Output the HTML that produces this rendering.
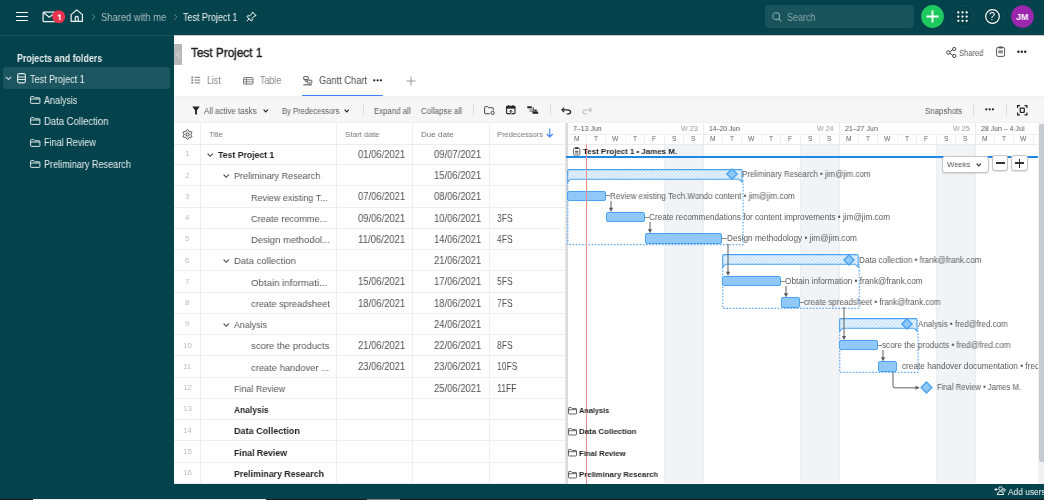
<!DOCTYPE html>
<html><head><meta charset="utf-8"><style>
html,body{margin:0;padding:0;}
body{width:1044px;height:500px;overflow:hidden;position:relative;background:#05434c;font-family:'Liberation Sans', sans-serif;}
.t{position:absolute;line-height:1;white-space:pre;transform-origin:0 0;will-change:transform;}
svg{overflow:visible}
</style></head><body>
<div style="position:absolute;left:0px;top:35px;width:174px;height:1px;background:#13525b"></div>
<div style="position:absolute;left:16px;top:11.55px;width:12px;height:1.9px;background:#fff;border-radius:1px"></div>
<div style="position:absolute;left:16px;top:15.55px;width:12px;height:1.9px;background:#fff;border-radius:1px"></div>
<div style="position:absolute;left:16px;top:19.55px;width:12px;height:1.9px;background:#fff;border-radius:1px"></div>
<svg style="position:absolute;left:41.5px;top:10.5px;" width="15" height="12" viewBox="0 0 15 12"><rect x="1.1" y="1.1" width="12.4" height="9.6" rx="0.9" fill="none" stroke="#f2f5f5" stroke-width="1.2"/><path d="M1.6 1.8 L7.3 6.3 L13 1.8" fill="none" stroke="#f2f5f5" stroke-width="1.2"/></svg>
<svg style="position:absolute;left:52px;top:10.1px;" width="13.4" height="13.4" viewBox="0 0 13.4 13.4"><circle cx="6.7" cy="6.7" r="6.5" fill="#e8344e"/></svg>
<svg style="position:absolute;left:56.5px;top:13.8px;" width="5" height="7" viewBox="0 0 5 7"><path d="M2.9 0.5 V6.2 M2.9 0.7 L0.8 2.2" fill="none" stroke="#fff" stroke-width="1.25" stroke-linejoin="round"/></svg>
<svg style="position:absolute;left:69.5px;top:9.3px;" width="13.5" height="13.5" viewBox="0 0 13.5 13.5"><path d="M6.75 0.9 L12.4 5.6 V12.3 H1.1 V5.6 Z" fill="none" stroke="#f2f5f5" stroke-width="1.2" stroke-linejoin="round"/><path d="M5.3 12.3 V8.9 Q5.3 7.3 6.75 7.3 Q8.2 7.3 8.2 8.9 V12.3" fill="none" stroke="#f2f5f5" stroke-width="1.2"/></svg>
<svg style="position:absolute;left:91px;top:13px;" width="5" height="8" viewBox="0 0 5 8"><path d="M1 1 L4 4 L1 7" fill="none" stroke="#55808a" stroke-width="1"/></svg>
<div class="t" style="left:100.70px;top:11.73px;font-size:10.6px;color:#a9bec1;transform:scaleX(0.8858);">Shared with me</div>
<svg style="position:absolute;left:173px;top:13px;" width="5" height="8" viewBox="0 0 5 8"><path d="M1 1 L4 4 L1 7" fill="none" stroke="#55808a" stroke-width="1"/></svg>
<div class="t" style="left:183.00px;top:11.73px;font-size:10.6px;color:#f2f5f5;transform:scaleX(0.8475);">Test Project 1</div>
<svg style="position:absolute;left:246px;top:11px;" width="11" height="11" viewBox="0 0 11 11"><path d="M6.5 1 L10 4.5 L8.2 5.2 L6 7.4 L6.3 9.3 L5.3 10 L1 5.7 L1.7 4.7 L3.6 5 L5.8 2.8 Z M3.3 7.7 L0.8 10.2" fill="none" stroke="#fff" stroke-width="1" stroke-linejoin="round"/></svg>
<div style="position:absolute;left:765px;top:5px;width:149.2px;height:22.8px;background:#19545c;border-radius:4px"></div>
<svg style="position:absolute;left:771.5px;top:11.5px;" width="10" height="10" viewBox="0 0 10 10"><circle cx="4.2" cy="4.2" r="3.4" fill="none" stroke="#8aa8ac" stroke-width="1.1"/><path d="M6.7 6.7 L9.3 9.3" stroke="#8aa8ac" stroke-width="1.1"/></svg>
<div class="t" style="left:787.20px;top:12.93px;font-size:10px;color:#86a4a8;transform:scaleX(0.9026);">Search</div>
<svg style="position:absolute;left:921px;top:5px;" width="23" height="23" viewBox="0 0 23 23"><circle cx="11.5" cy="11.5" r="11.4" fill="#1ec95f"/><path d="M11.5 5.5 V17.5 M5.5 11.5 H17.5" stroke="#fff" stroke-width="1.8"/></svg>
<svg style="position:absolute;left:951px;top:4.7px;" width="23" height="23" viewBox="0 0 23 23"><circle cx="11.5" cy="11.5" r="11" fill="#053f48" stroke="#11505a" stroke-width="0.8"/><circle cx="7.30" cy="7.40" r="1.15" fill="#fff"/><circle cx="7.30" cy="11.60" r="1.15" fill="#fff"/><circle cx="7.30" cy="15.80" r="1.15" fill="#fff"/><circle cx="11.50" cy="7.40" r="1.15" fill="#fff"/><circle cx="11.50" cy="11.60" r="1.15" fill="#fff"/><circle cx="11.50" cy="15.80" r="1.15" fill="#fff"/><circle cx="15.70" cy="7.40" r="1.15" fill="#fff"/><circle cx="15.70" cy="11.60" r="1.15" fill="#fff"/><circle cx="15.70" cy="15.80" r="1.15" fill="#fff"/></svg>
<svg style="position:absolute;left:980.8px;top:4.9px;" width="23" height="23" viewBox="0 0 23 23"><circle cx="11.5" cy="11.5" r="11" fill="#053f48" stroke="#11505a" stroke-width="0.8"/><circle cx="11.5" cy="11.5" r="6.8" fill="none" stroke="#fff" stroke-width="1.2"/></svg>
<div class="t" style="left:989.24px;top:11.24px;font-size:11px;color:#fff;">?</div>
<svg style="position:absolute;left:1010.5px;top:5px;" width="23" height="23" viewBox="0 0 23 23"><circle cx="11.5" cy="11.5" r="11.3" fill="#9a27ae"/></svg>
<div class="t" style="left:1015.75px;top:12.28px;font-size:9.5px;color:#fff;font-weight:bold;transform:scaleX(0.9467);">JM</div>
<div class="t" style="left:16.90px;top:53.53px;font-size:10.2px;color:#e9eff0;font-weight:bold;transform:scaleX(0.8698);">Projects and folders</div>
<div style="position:absolute;left:2.6px;top:67.4px;width:167.4px;height:21.2px;background:#1b5660;border-radius:3px"></div>
<svg style="position:absolute;left:5px;top:76px;" width="7" height="5" viewBox="0 0 7 5"><path d="M0.8 0.8 L3.5 3.5 L6.2 0.8" fill="none" stroke="#c5d5d8" stroke-width="1.2"/></svg>
<svg style="position:absolute;left:16.8px;top:72.8px;" width="9" height="10.5" viewBox="0 0 9 10.5"><rect x="0.6" y="0.6" width="7.8" height="9.3" rx="1.8" fill="none" stroke="#dce6e7" stroke-width="1.1"/><path d="M0.8 4 H8.2 M0.8 6.5 H8.2" stroke="#dce6e7" stroke-width="1"/></svg>
<div class="t" style="left:30.20px;top:74.83px;font-size:10.4px;color:#e9eff0;transform:scaleX(0.8673);">Test Project 1</div>
<svg style="position:absolute;left:30px;top:96px;" width="10.5" height="8" viewBox="0 0 10.5 8"><path d="M0.6 1.2 Q0.6 0.6 1.2 0.6 H3.8 L5 1.8 H9.3 Q9.9 1.8 9.9 2.4 V6.8 Q9.9 7.4 9.3 7.4 H1.2 Q0.6 7.4 0.6 6.8 Z M0.6 3 H9.9" fill="none" stroke="#dce6e7" stroke-width="1"/></svg>
<div class="t" style="left:43.60px;top:95.73px;font-size:10.2px;color:#e9eff0;transform:scaleX(0.8804);">Analysis</div>
<svg style="position:absolute;left:30px;top:117.3px;" width="10.5" height="8" viewBox="0 0 10.5 8"><path d="M0.6 1.2 Q0.6 0.6 1.2 0.6 H3.8 L5 1.8 H9.3 Q9.9 1.8 9.9 2.4 V6.8 Q9.9 7.4 9.3 7.4 H1.2 Q0.6 7.4 0.6 6.8 Z M0.6 3 H9.9" fill="none" stroke="#dce6e7" stroke-width="1"/></svg>
<div class="t" style="left:43.60px;top:117.03px;font-size:10.2px;color:#e9eff0;transform:scaleX(0.9321);">Data Collection</div>
<svg style="position:absolute;left:30px;top:138.7px;" width="10.5" height="8" viewBox="0 0 10.5 8"><path d="M0.6 1.2 Q0.6 0.6 1.2 0.6 H3.8 L5 1.8 H9.3 Q9.9 1.8 9.9 2.4 V6.8 Q9.9 7.4 9.3 7.4 H1.2 Q0.6 7.4 0.6 6.8 Z M0.6 3 H9.9" fill="none" stroke="#dce6e7" stroke-width="1"/></svg>
<div class="t" style="left:43.60px;top:138.43px;font-size:10.2px;color:#e9eff0;transform:scaleX(0.8881);">Final Review</div>
<svg style="position:absolute;left:30px;top:160px;" width="10.5" height="8" viewBox="0 0 10.5 8"><path d="M0.6 1.2 Q0.6 0.6 1.2 0.6 H3.8 L5 1.8 H9.3 Q9.9 1.8 9.9 2.4 V6.8 Q9.9 7.4 9.3 7.4 H1.2 Q0.6 7.4 0.6 6.8 Z M0.6 3 H9.9" fill="none" stroke="#dce6e7" stroke-width="1"/></svg>
<div class="t" style="left:43.60px;top:159.73px;font-size:10.2px;color:#e9eff0;transform:scaleX(0.8913);">Preliminary Research</div>
<div style="position:absolute;left:174px;top:35px;width:870px;height:448.5px;background:#fff"></div>
<div style="position:absolute;left:174px;top:35px;width:870px;height:1px;background:#c3cbcc"></div>
<div style="position:absolute;left:174px;top:44px;width:8px;height:20.5px;background:#b9b9b9"></div>
<svg style="position:absolute;left:175.5px;top:50.5px;" width="5" height="7" viewBox="0 0 5 7"><path d="M3.5 0.8 L1 3.5 L3.5 6.2" fill="none" stroke="#e6e6e6" stroke-width="1"/></svg>
<div class="t" style="left:191.00px;top:46.01px;font-size:13.3px;color:#1f1f1f;transform:scaleX(0.8863);-webkit-text-stroke:0.45px #1f1f1f;">Test Project 1</div>
<svg style="position:absolute;left:945.5px;top:47px;" width="10.5" height="11" viewBox="0 0 10.5 11"><circle cx="2.3" cy="5.5" r="1.7" fill="none" stroke="#444" stroke-width="1"/><circle cx="8.2" cy="2" r="1.6" fill="none" stroke="#444" stroke-width="1"/><circle cx="8.2" cy="9" r="1.6" fill="none" stroke="#444" stroke-width="1"/><path d="M3.8 4.6 L6.8 2.8 M3.8 6.4 L6.8 8.2" stroke="#444" stroke-width="1"/></svg>
<div class="t" style="left:959.30px;top:48.82px;font-size:8.4px;color:#555;transform:scaleX(0.9032);">Shared</div>
<svg style="position:absolute;left:995.5px;top:46px;" width="9.5" height="11" viewBox="0 0 9.5 11"><rect x="0.6" y="1.4" width="8" height="9" rx="1.5" fill="none" stroke="#555" stroke-width="1"/><rect x="2.6" y="0.5" width="4" height="2" rx="0.5" fill="#555"/><rect x="2.3" y="4.3" width="4.6" height="3" fill="#888"/></svg>
<svg style="position:absolute;left:1017px;top:50px;" width="10" height="3.5" viewBox="0 0 10 3.5"><circle cx="1.4" cy="1.7" r="1.2" fill="#222"/><circle cx="4.8" cy="1.7" r="1.2" fill="#222"/><circle cx="8.2" cy="1.7" r="1.2" fill="#222"/></svg>
<svg style="position:absolute;left:191.2px;top:75.6px;" width="9.5" height="8.5" viewBox="0 0 9.5 8.5"><rect x="0.4" y="0.5" width="1.7" height="1.7" fill="#7a7a7a"/><path d="M3.6 1.35 H9.2" stroke="#7a7a7a" stroke-width="1"/><rect x="0.4" y="3.25" width="1.7" height="1.7" fill="#7a7a7a"/><path d="M3.6 4.1 H9.2" stroke="#7a7a7a" stroke-width="1"/><rect x="0.4" y="6.0" width="1.7" height="1.7" fill="#7a7a7a"/><path d="M3.6 6.85 H9.2" stroke="#7a7a7a" stroke-width="1"/></svg>
<div class="t" style="left:207.00px;top:75.58px;font-size:10.3px;color:#858585;transform:scaleX(0.8546);">List</div>
<svg style="position:absolute;left:242.8px;top:76.6px;" width="10.5" height="7.5" viewBox="0 0 10.5 7.5"><rect x="0.5" y="0.5" width="9.5" height="6.6" rx="0.8" fill="none" stroke="#7a7a7a" stroke-width="1"/><path d="M0.5 2.7 H10 M0.5 4.9 H10 M3.5 0.5 V7.1" stroke="#7a7a7a" stroke-width="0.9"/></svg>
<div class="t" style="left:259.50px;top:75.58px;font-size:10.3px;color:#858585;transform:scaleX(0.8609);">Table</div>
<svg style="position:absolute;left:303.2px;top:75.6px;" width="9.5" height="9.5" viewBox="0 0 9.5 9.5"><rect x="0.7" y="0.7" width="4.6" height="2.8" rx="0.5" fill="none" stroke="#555" stroke-width="1"/><path d="M2.3 3.5 V5.3 H4.2" stroke="#555" stroke-width="1" fill="none"/><rect x="4.2" y="4.2" width="4.6" height="2.8" rx="0.5" fill="none" stroke="#555" stroke-width="1"/><path d="M0.4 8.8 H9" stroke="#555" stroke-width="1.1"/></svg>
<div class="t" style="left:318.60px;top:75.58px;font-size:10.3px;color:#505050;transform:scaleX(0.9036);">Gantt Chart</div>
<svg style="position:absolute;left:373px;top:78.8px;" width="10" height="3" viewBox="0 0 10 3"><circle cx="1.3" cy="1.3" r="1.15" fill="#222"/><circle cx="4.6" cy="1.3" r="1.15" fill="#222"/><circle cx="7.8999999999999995" cy="1.3" r="1.15" fill="#222"/></svg>
<svg style="position:absolute;left:405.5px;top:76px;" width="10" height="10" viewBox="0 0 10 10"><path d="M5 0.5 V9.5 M0.5 5 H9.5" stroke="#9a9a9a" stroke-width="1"/></svg>
<div style="position:absolute;left:302.3px;top:94.5px;width:81px;height:1.8px;background:#3b82f6;border-radius:1px"></div>
<div style="position:absolute;left:174px;top:96px;width:870px;height:26.5px;background:#f6f6f6"></div>
<div style="position:absolute;left:174px;top:96px;width:870px;height:2px;background:#f2f2f2"></div>
<div style="position:absolute;left:174px;top:121.5px;width:870px;height:1px;background:#f1f1f1"></div>
<svg style="position:absolute;left:191.5px;top:105.5px;" width="8" height="9.5" viewBox="0 0 8 9.5"><path d="M0.3 0.5 H7.7 L4.9 4.4 V9 L3.1 8 V4.4 Z" fill="#222"/></svg>
<div class="t" style="left:204.00px;top:107.17px;font-size:8.3px;color:#5a5a5a;transform:scaleX(0.9567);">All active tasks</div>
<svg style="position:absolute;left:262.5px;top:108.8px;" width="5.5" height="4" viewBox="0 0 5.5 4"><path d="M0.6 0.7 L2.75 2.9 L4.9 0.7" fill="none" stroke="#222" stroke-width="1.1"/></svg>
<div class="t" style="left:281.50px;top:107.17px;font-size:8.3px;color:#5a5a5a;transform:scaleX(0.9168);">By Predecessors</div>
<svg style="position:absolute;left:344.2px;top:108.8px;" width="5.5" height="4" viewBox="0 0 5.5 4"><path d="M0.6 0.7 L2.75 2.9 L4.9 0.7" fill="none" stroke="#222" stroke-width="1.1"/></svg>
<div style="position:absolute;left:363.3px;top:105.2px;width:1px;height:9.5px;background:#dcdcdc"></div>
<div class="t" style="left:373.80px;top:107.17px;font-size:8.3px;color:#5a5a5a;transform:scaleX(0.9419);">Expand all</div>
<div class="t" style="left:421.00px;top:107.17px;font-size:8.3px;color:#5a5a5a;transform:scaleX(0.9559);">Collapse all</div>
<div style="position:absolute;left:473.4px;top:105.2px;width:1px;height:9.5px;background:#dcdcdc"></div>
<svg style="position:absolute;left:484px;top:105.8px;" width="11.5" height="9" viewBox="0 0 11.5 9"><path d="M5.6 7.7 H1.3 Q0.6 7.7 0.6 7 V1.3 Q0.6 0.6 1.3 0.6 H3.7 L4.8 1.7 H8.6 Q9.3 1.7 9.3 2.4 V4.3" fill="none" stroke="#444" stroke-width="1"/><circle cx="8.6" cy="6.9" r="1.6" fill="none" stroke="#444" stroke-width="1"/></svg>
<svg style="position:absolute;left:506.3px;top:105.4px;" width="9.8" height="9.5" viewBox="0 0 9.8 9.5"><path d="M4 8.6 H1.4 Q0.6 8.6 0.6 7.8 V2 Q0.6 1.2 1.4 1.2 H8.2 Q9 1.2 9 2 V7.8 Q9 8.6 8.2 8.6 H5.8" fill="none" stroke="#222" stroke-width="1.1"/><rect x="0.6" y="1.2" width="8.4" height="2.4" fill="#222"/><path d="M2.6 0 V1.5 M7 0 V1.5" stroke="#222" stroke-width="1"/><path d="M4.9 9.5 V5.3 M3.6 6.6 L4.9 5.2 L6.2 6.6" stroke="#222" stroke-width="1" fill="none"/></svg>
<svg style="position:absolute;left:527.2px;top:106px;" width="11.5" height="8" viewBox="0 0 11.5 8"><rect x="0.3" y="0.3" width="4.5" height="2" fill="#222"/><path d="M2.5 3.8 H5.5 M2.5 5.3 H5.5" stroke="#555" stroke-width="0.8"/><path d="M6.2 1.3 V7.2" stroke="#222" stroke-width="1"/><rect x="5.6" y="5.6" width="5.6" height="2.2" fill="#222"/><rect x="7.3" y="3.6" width="2.5" height="2" fill="#222"/></svg>
<div style="position:absolute;left:550px;top:105.2px;width:1px;height:9.5px;background:#dcdcdc"></div>
<svg style="position:absolute;left:560.8px;top:106.5px;" width="10.5" height="7.5" viewBox="0 0 10.5 7.5"><path d="M3.2 0.6 L0.9 2.9 L3.2 5.2" fill="none" stroke="#222" stroke-width="1.2"/><path d="M1.2 2.9 H6.3 Q9.6 2.9 9.6 5 Q9.6 7 6.3 7 H5.5" fill="none" stroke="#222" stroke-width="1.2"/></svg>
<svg style="position:absolute;left:581.6px;top:106.5px;" width="10.5" height="7.5" viewBox="0 0 10.5 7.5"><path d="M7.3 0.6 L9.6 2.9 L7.3 5.2" fill="none" stroke="#c6c6c6" stroke-width="1.2"/><path d="M9.3 2.9 H4.2 Q0.9 2.9 0.9 5 Q0.9 7 4.2 7 H5" fill="none" stroke="#c6c6c6" stroke-width="1.2"/></svg>
<div class="t" style="left:925.40px;top:107.17px;font-size:8.3px;color:#5a5a5a;transform:scaleX(0.9485);">Snapshots</div>
<div style="position:absolute;left:973.3px;top:104.6px;width:1px;height:11px;background:#dcdcdc"></div>
<svg style="position:absolute;left:984.8px;top:108.3px;" width="10" height="3" viewBox="0 0 10 3"><circle cx="1.3" cy="1.3" r="1.15" fill="#222"/><circle cx="4.6" cy="1.3" r="1.15" fill="#222"/><circle cx="7.8999999999999995" cy="1.3" r="1.15" fill="#222"/></svg>
<div style="position:absolute;left:1006.1px;top:104.6px;width:1px;height:11px;background:#dcdcdc"></div>
<svg style="position:absolute;left:1016.8px;top:104.6px;" width="10.5" height="10.5" viewBox="0 0 10.5 10.5"><path d="M0.6 3 V0.6 H3 M7.5 0.6 H9.9 V3 M9.9 7.5 V9.9 H7.5 M3 9.9 H0.6 V7.5" fill="none" stroke="#222" stroke-width="1.2"/><rect x="3.2" y="3.2" width="4.1" height="4.1" rx="0.6" fill="none" stroke="#222" stroke-width="1.2"/></svg>
<div style="position:absolute;left:174px;top:144px;width:391px;height:1px;background:#ededed"></div>
<div style="position:absolute;left:174px;top:164.0px;width:391px;height:1px;background:#efefef"></div>
<div style="position:absolute;left:174px;top:185.25px;width:391px;height:1px;background:#efefef"></div>
<div style="position:absolute;left:174px;top:206.5px;width:391px;height:1px;background:#efefef"></div>
<div style="position:absolute;left:174px;top:227.75px;width:391px;height:1px;background:#efefef"></div>
<div style="position:absolute;left:174px;top:249.0px;width:391px;height:1px;background:#efefef"></div>
<div style="position:absolute;left:174px;top:270.25px;width:391px;height:1px;background:#efefef"></div>
<div style="position:absolute;left:174px;top:291.5px;width:391px;height:1px;background:#efefef"></div>
<div style="position:absolute;left:174px;top:312.75px;width:391px;height:1px;background:#efefef"></div>
<div style="position:absolute;left:174px;top:334.0px;width:391px;height:1px;background:#efefef"></div>
<div style="position:absolute;left:174px;top:355.25px;width:391px;height:1px;background:#efefef"></div>
<div style="position:absolute;left:174px;top:376.5px;width:391px;height:1px;background:#efefef"></div>
<div style="position:absolute;left:174px;top:397.75px;width:391px;height:1px;background:#efefef"></div>
<div style="position:absolute;left:174px;top:419.0px;width:391px;height:1px;background:#efefef"></div>
<div style="position:absolute;left:174px;top:440.25px;width:391px;height:1px;background:#efefef"></div>
<div style="position:absolute;left:174px;top:461.5px;width:391px;height:1px;background:#efefef"></div>
<div style="position:absolute;left:174px;top:482.75px;width:391px;height:1px;background:#efefef"></div>
<div style="position:absolute;left:199.9px;top:122.5px;width:1px;height:361px;background:#efefef"></div>
<div style="position:absolute;left:336.3px;top:122.5px;width:1px;height:361px;background:#efefef"></div>
<div style="position:absolute;left:412.0px;top:122.5px;width:1px;height:361px;background:#efefef"></div>
<div style="position:absolute;left:488.5px;top:122.5px;width:1px;height:361px;background:#efefef"></div>
<svg style="position:absolute;left:182.2px;top:128.5px;" width="11" height="11" viewBox="0 0 11 11"><g fill="none" stroke="#333" stroke-width="1"><circle cx="5.5" cy="5.5" r="1.6"/><path d="M5.50 0.65 L5.91 0.77 L6.28 1.09 L6.56 1.54 L6.77 2.00 L6.96 2.37 L7.17 2.60 L7.48 2.67 L7.89 2.65 L8.40 2.60 L8.93 2.62 L9.39 2.78 L9.70 3.07 L9.80 3.49 L9.71 3.97 L9.46 4.44 L9.17 4.85 L8.94 5.20 L8.85 5.50 L8.94 5.80 L9.17 6.15 L9.46 6.56 L9.71 7.03 L9.80 7.51 L9.70 7.92 L9.39 8.22 L8.93 8.38 L8.40 8.40 L7.89 8.35 L7.48 8.33 L7.18 8.40 L6.96 8.63 L6.77 9.00 L6.56 9.46 L6.28 9.91 L5.91 10.23 L5.50 10.35 L5.09 10.23 L4.72 9.91 L4.44 9.46 L4.23 9.00 L4.04 8.63 L3.82 8.40 L3.52 8.33 L3.11 8.35 L2.60 8.40 L2.07 8.38 L1.61 8.22 L1.30 7.93 L1.20 7.51 L1.29 7.03 L1.54 6.56 L1.83 6.15 L2.06 5.80 L2.15 5.50 L2.06 5.20 L1.83 4.85 L1.54 4.44 L1.29 3.97 L1.20 3.49 L1.30 3.08 L1.61 2.78 L2.07 2.62 L2.60 2.60 L3.11 2.65 L3.52 2.67 L3.83 2.60 L4.04 2.37 L4.23 2.00 L4.44 1.54 L4.72 1.09 L5.09 0.77 L5.50 0.65 Z"/></g></svg>
<div class="t" style="left:209.00px;top:130.96px;font-size:8.1px;color:#777;transform:scaleX(0.9200);">Title</div>
<div class="t" style="left:344.80px;top:131.16px;font-size:8.1px;color:#777;transform:scaleX(0.9855);">Start date</div>
<div class="t" style="left:420.90px;top:131.16px;font-size:8.1px;color:#777;transform:scaleX(0.9860);">Due date</div>
<div class="t" style="left:497.00px;top:131.16px;font-size:8.1px;color:#777;transform:scaleX(0.9296);">Predecessors</div>
<svg style="position:absolute;left:545.5px;top:128px;" width="7.5" height="10" viewBox="0 0 7.5 10"><path d="M3.75 0.5 V9 M0.8 6 L3.75 9 L6.7 6" fill="none" stroke="#3b82f6" stroke-width="1.1"/></svg>
<div class="t" style="left:184.97px;top:150.31px;font-size:8px;color:#bdbdbd;">1</div>
<svg style="position:absolute;left:206.5px;top:152.5px;" width="6.5" height="4.5" viewBox="0 0 6.5 4.5"><path d="M0.6 0.7 L3.2 3.3 L5.8 0.7" fill="none" stroke="#444" stroke-width="1.1"/></svg>
<div class="t" style="left:218.10px;top:150.13px;font-size:9.8px;color:#242424;font-weight:bold;transform:scaleX(0.8862);">Test Project 1</div>
<div class="t" style="left:357.50px;top:149.88px;font-size:10.3px;color:#505050;transform:scaleX(0.9157);">01/06/2021</div>
<div class="t" style="left:434.00px;top:149.88px;font-size:10.3px;color:#505050;transform:scaleX(0.9157);">09/07/2021</div>
<div class="t" style="left:184.97px;top:171.56px;font-size:8px;color:#bdbdbd;">2</div>
<svg style="position:absolute;left:222.7px;top:173.75px;" width="6.5" height="4.5" viewBox="0 0 6.5 4.5"><path d="M0.6 0.7 L3.2 3.3 L5.8 0.7" fill="none" stroke="#444" stroke-width="1.1"/></svg>
<div class="t" style="left:234.20px;top:171.38px;font-size:9.8px;color:#555555;transform:scaleX(0.9204);">Preliminary Research</div>
<div class="t" style="left:434.00px;top:171.13px;font-size:10.3px;color:#505050;transform:scaleX(0.9157);">15/06/2021</div>
<div class="t" style="left:184.97px;top:192.81px;font-size:8px;color:#bdbdbd;">3</div>
<div class="t" style="left:250.50px;top:192.63px;font-size:9.8px;color:#555555;transform:scaleX(0.9167);">Review existing T...</div>
<div class="t" style="left:357.50px;top:192.38px;font-size:10.3px;color:#505050;transform:scaleX(0.9157);">07/06/2021</div>
<div class="t" style="left:434.00px;top:192.38px;font-size:10.3px;color:#505050;transform:scaleX(0.9157);">08/06/2021</div>
<div class="t" style="left:184.97px;top:214.06px;font-size:8px;color:#bdbdbd;">4</div>
<div class="t" style="left:250.50px;top:213.88px;font-size:9.8px;color:#555555;transform:scaleX(0.9393);">Create recomme...</div>
<div class="t" style="left:357.50px;top:213.63px;font-size:10.3px;color:#505050;transform:scaleX(0.9157);">09/06/2021</div>
<div class="t" style="left:434.00px;top:213.63px;font-size:10.3px;color:#505050;transform:scaleX(0.9157);">10/06/2021</div>
<div class="t" style="left:496.60px;top:213.63px;font-size:10.3px;color:#505050;transform:scaleX(0.8258);">3FS</div>
<div class="t" style="left:184.97px;top:235.31px;font-size:8px;color:#bdbdbd;">5</div>
<div class="t" style="left:250.50px;top:235.13px;font-size:9.8px;color:#555555;transform:scaleX(0.9647);">Design methodol...</div>
<div class="t" style="left:357.50px;top:234.88px;font-size:10.3px;color:#505050;transform:scaleX(0.9295);">11/06/2021</div>
<div class="t" style="left:434.00px;top:234.88px;font-size:10.3px;color:#505050;transform:scaleX(0.9157);">14/06/2021</div>
<div class="t" style="left:496.60px;top:234.88px;font-size:10.3px;color:#505050;transform:scaleX(0.8258);">4FS</div>
<div class="t" style="left:184.97px;top:256.56px;font-size:8px;color:#bdbdbd;">6</div>
<svg style="position:absolute;left:222.7px;top:258.75px;" width="6.5" height="4.5" viewBox="0 0 6.5 4.5"><path d="M0.6 0.7 L3.2 3.3 L5.8 0.7" fill="none" stroke="#444" stroke-width="1.1"/></svg>
<div class="t" style="left:234.20px;top:256.38px;font-size:9.8px;color:#555555;transform:scaleX(0.9632);">Data collection</div>
<div class="t" style="left:434.00px;top:256.13px;font-size:10.3px;color:#505050;transform:scaleX(0.9157);">21/06/2021</div>
<div class="t" style="left:184.97px;top:277.81px;font-size:8px;color:#bdbdbd;">7</div>
<div class="t" style="left:250.50px;top:277.63px;font-size:9.8px;color:#555555;transform:scaleX(0.9854);">Obtain informati...</div>
<div class="t" style="left:357.50px;top:277.38px;font-size:10.3px;color:#505050;transform:scaleX(0.9157);">15/06/2021</div>
<div class="t" style="left:434.00px;top:277.38px;font-size:10.3px;color:#505050;transform:scaleX(0.9157);">17/06/2021</div>
<div class="t" style="left:496.60px;top:277.38px;font-size:10.3px;color:#505050;transform:scaleX(0.8258);">5FS</div>
<div class="t" style="left:184.97px;top:299.06px;font-size:8px;color:#bdbdbd;">8</div>
<div class="t" style="left:250.50px;top:298.88px;font-size:9.8px;color:#555555;transform:scaleX(0.9395);">create spreadsheet</div>
<div class="t" style="left:357.50px;top:298.63px;font-size:10.3px;color:#505050;transform:scaleX(0.9157);">18/06/2021</div>
<div class="t" style="left:434.00px;top:298.63px;font-size:10.3px;color:#505050;transform:scaleX(0.9157);">18/06/2021</div>
<div class="t" style="left:496.60px;top:298.63px;font-size:10.3px;color:#505050;transform:scaleX(0.8258);">7FS</div>
<div class="t" style="left:184.97px;top:320.31px;font-size:8px;color:#bdbdbd;">9</div>
<svg style="position:absolute;left:222.7px;top:322.5px;" width="6.5" height="4.5" viewBox="0 0 6.5 4.5"><path d="M0.6 0.7 L3.2 3.3 L5.8 0.7" fill="none" stroke="#444" stroke-width="1.1"/></svg>
<div class="t" style="left:234.20px;top:320.13px;font-size:9.8px;color:#555555;transform:scaleX(0.9045);">Analysis</div>
<div class="t" style="left:434.00px;top:319.88px;font-size:10.3px;color:#505050;transform:scaleX(0.9157);">24/06/2021</div>
<div class="t" style="left:182.75px;top:341.56px;font-size:8px;color:#bdbdbd;">10</div>
<div class="t" style="left:250.50px;top:341.38px;font-size:9.8px;color:#555555;transform:scaleX(0.9714);">score the products</div>
<div class="t" style="left:357.50px;top:341.13px;font-size:10.3px;color:#505050;transform:scaleX(0.9157);">21/06/2021</div>
<div class="t" style="left:434.00px;top:341.13px;font-size:10.3px;color:#505050;transform:scaleX(0.9157);">22/06/2021</div>
<div class="t" style="left:496.60px;top:341.13px;font-size:10.3px;color:#505050;transform:scaleX(0.8258);">8FS</div>
<div class="t" style="left:183.04px;top:362.81px;font-size:8px;color:#bdbdbd;">11</div>
<div class="t" style="left:250.50px;top:362.63px;font-size:9.8px;color:#555555;transform:scaleX(0.9547);">create handover ...</div>
<div class="t" style="left:357.50px;top:362.38px;font-size:10.3px;color:#505050;transform:scaleX(0.9157);">23/06/2021</div>
<div class="t" style="left:434.00px;top:362.38px;font-size:10.3px;color:#505050;transform:scaleX(0.9157);">23/06/2021</div>
<div class="t" style="left:496.60px;top:362.38px;font-size:10.3px;color:#505050;transform:scaleX(0.8244);">10FS</div>
<div class="t" style="left:182.75px;top:384.06px;font-size:8px;color:#bdbdbd;">12</div>
<div class="t" style="left:234.00px;top:383.88px;font-size:9.8px;color:#555555;transform:scaleX(0.9128);">Final Review</div>
<div class="t" style="left:434.00px;top:383.63px;font-size:10.3px;color:#505050;transform:scaleX(0.9157);">25/06/2021</div>
<div class="t" style="left:496.60px;top:383.63px;font-size:10.3px;color:#505050;transform:scaleX(0.8376);">11FF</div>
<div class="t" style="left:182.75px;top:405.31px;font-size:8px;color:#bdbdbd;">13</div>
<div class="t" style="left:234.00px;top:405.13px;font-size:9.8px;color:#242424;font-weight:bold;transform:scaleX(0.8608);">Analysis</div>
<div class="t" style="left:182.75px;top:426.56px;font-size:8px;color:#bdbdbd;">14</div>
<div class="t" style="left:234.00px;top:426.38px;font-size:9.8px;color:#242424;font-weight:bold;transform:scaleX(0.9241);">Data Collection</div>
<div class="t" style="left:182.75px;top:447.81px;font-size:8px;color:#bdbdbd;">15</div>
<div class="t" style="left:234.00px;top:447.63px;font-size:9.8px;color:#242424;font-weight:bold;transform:scaleX(0.8929);">Final Review</div>
<div class="t" style="left:182.75px;top:469.06px;font-size:8px;color:#bdbdbd;">16</div>
<div class="t" style="left:234.00px;top:468.88px;font-size:9.8px;color:#242424;font-weight:bold;transform:scaleX(0.8972);">Preliminary Research</div>
<div style="position:absolute;left:565px;top:122.5px;width:1px;height:361px;background:#e6e6e6"></div>
<div style="position:absolute;left:566px;top:122.5px;width:1.5px;height:361px;background:#dadbde"></div>
<div style="position:absolute;left:664.1428571428571px;top:144.2px;width:38.857142857142854px;height:339.3px;background:#f2f3f7"></div>
<div style="position:absolute;left:663.6428571428571px;top:144.2px;width:1.5px;height:339.3px;background:#edeef1"></div>
<div style="position:absolute;left:702.0px;top:144.2px;width:1.5px;height:339.3px;background:#edeef1"></div>
<div style="position:absolute;left:800.1428571428571px;top:144.2px;width:38.857142857142854px;height:339.3px;background:#f2f3f7"></div>
<div style="position:absolute;left:799.6428571428571px;top:144.2px;width:1.5px;height:339.3px;background:#edeef1"></div>
<div style="position:absolute;left:838.0px;top:144.2px;width:1.5px;height:339.3px;background:#edeef1"></div>
<div style="position:absolute;left:936.1428571428571px;top:144.2px;width:38.857142857142854px;height:339.3px;background:#f2f3f7"></div>
<div style="position:absolute;left:935.6428571428571px;top:144.2px;width:1.5px;height:339.3px;background:#edeef1"></div>
<div style="position:absolute;left:974.0px;top:144.2px;width:1.5px;height:339.3px;background:#edeef1"></div>
<div style="position:absolute;left:1072.142857142857px;top:144.2px;width:38.857142857142854px;height:339.3px;background:#f2f3f7"></div>
<div style="position:absolute;left:1071.642857142857px;top:144.2px;width:1.5px;height:339.3px;background:#edeef1"></div>
<div style="position:absolute;left:1110.0px;top:144.2px;width:1.5px;height:339.3px;background:#edeef1"></div>
<div style="position:absolute;left:567.5px;top:134px;width:471px;height:1px;background:#f0f0f0"></div>
<div style="position:absolute;left:567.5px;top:143.7px;width:471px;height:1px;background:#ebebeb"></div>
<div style="position:absolute;left:585.9285714285714px;top:134.5px;width:1px;height:9.5px;background:#f0f0f0"></div>
<div style="position:absolute;left:605.3571428571429px;top:134.5px;width:1px;height:9.5px;background:#f0f0f0"></div>
<div style="position:absolute;left:624.7857142857142px;top:134.5px;width:1px;height:9.5px;background:#f0f0f0"></div>
<div style="position:absolute;left:644.2142857142857px;top:134.5px;width:1px;height:9.5px;background:#f0f0f0"></div>
<div style="position:absolute;left:663.6428571428571px;top:134.5px;width:1px;height:9.5px;background:#f0f0f0"></div>
<div style="position:absolute;left:683.0714285714286px;top:134.5px;width:1px;height:9.5px;background:#f0f0f0"></div>
<div style="position:absolute;left:702.5px;top:123px;width:1px;height:21.2px;background:#ebebeb"></div>
<div style="position:absolute;left:721.9285714285714px;top:134.5px;width:1px;height:9.5px;background:#f0f0f0"></div>
<div style="position:absolute;left:741.3571428571429px;top:134.5px;width:1px;height:9.5px;background:#f0f0f0"></div>
<div style="position:absolute;left:760.7857142857142px;top:134.5px;width:1px;height:9.5px;background:#f0f0f0"></div>
<div style="position:absolute;left:780.2142857142857px;top:134.5px;width:1px;height:9.5px;background:#f0f0f0"></div>
<div style="position:absolute;left:799.6428571428571px;top:134.5px;width:1px;height:9.5px;background:#f0f0f0"></div>
<div style="position:absolute;left:819.0714285714286px;top:134.5px;width:1px;height:9.5px;background:#f0f0f0"></div>
<div style="position:absolute;left:838.5px;top:123px;width:1px;height:21.2px;background:#ebebeb"></div>
<div style="position:absolute;left:857.9285714285713px;top:134.5px;width:1px;height:9.5px;background:#f0f0f0"></div>
<div style="position:absolute;left:877.3571428571429px;top:134.5px;width:1px;height:9.5px;background:#f0f0f0"></div>
<div style="position:absolute;left:896.7857142857142px;top:134.5px;width:1px;height:9.5px;background:#f0f0f0"></div>
<div style="position:absolute;left:916.2142857142857px;top:134.5px;width:1px;height:9.5px;background:#f0f0f0"></div>
<div style="position:absolute;left:935.6428571428571px;top:134.5px;width:1px;height:9.5px;background:#f0f0f0"></div>
<div style="position:absolute;left:955.0714285714286px;top:134.5px;width:1px;height:9.5px;background:#f0f0f0"></div>
<div style="position:absolute;left:974.5px;top:123px;width:1px;height:21.2px;background:#ebebeb"></div>
<div style="position:absolute;left:993.9285714285713px;top:134.5px;width:1px;height:9.5px;background:#f0f0f0"></div>
<div style="position:absolute;left:1013.3571428571429px;top:134.5px;width:1px;height:9.5px;background:#f0f0f0"></div>
<div style="position:absolute;left:1032.7857142857142px;top:134.5px;width:1px;height:9.5px;background:#f0f0f0"></div>
<div class="t" style="left:573.20px;top:124.96px;font-size:7.7px;color:#555;transform:scaleX(0.9071);">7–13 Jun</div>
<div class="t" style="left:681.00px;top:124.96px;font-size:7.7px;color:#9a9a9a;transform:scaleX(0.9191);">W 23</div>
<div class="t" style="left:709.20px;top:124.96px;font-size:7.7px;color:#555;transform:scaleX(0.8491);">14–20 Jun</div>
<div class="t" style="left:817.00px;top:124.96px;font-size:7.7px;color:#9a9a9a;transform:scaleX(0.9191);">W 24</div>
<div class="t" style="left:845.20px;top:124.96px;font-size:7.7px;color:#555;transform:scaleX(0.9131);">21–27 Jun</div>
<div class="t" style="left:953.00px;top:124.96px;font-size:7.7px;color:#9a9a9a;transform:scaleX(0.9191);">W 25</div>
<div class="t" style="left:981.20px;top:124.96px;font-size:7.7px;color:#555;transform:scaleX(0.9044);">28 Jun – 4 Jul</div>
<div class="t" style="left:573.93px;top:136.45px;font-size:6.7px;color:#666;">M</div>
<div class="t" style="left:594.10px;top:136.45px;font-size:6.7px;color:#666;">T</div>
<div class="t" style="left:612.42px;top:136.45px;font-size:6.7px;color:#666;">W</div>
<div class="t" style="left:632.95px;top:136.45px;font-size:6.7px;color:#666;">T</div>
<div class="t" style="left:652.38px;top:136.45px;font-size:6.7px;color:#666;">F</div>
<div class="t" style="left:671.62px;top:136.45px;font-size:6.7px;color:#666;">S</div>
<div class="t" style="left:691.05px;top:136.45px;font-size:6.7px;color:#666;">S</div>
<div class="t" style="left:709.93px;top:136.45px;font-size:6.7px;color:#666;">M</div>
<div class="t" style="left:730.10px;top:136.45px;font-size:6.7px;color:#666;">T</div>
<div class="t" style="left:748.42px;top:136.45px;font-size:6.7px;color:#666;">W</div>
<div class="t" style="left:768.95px;top:136.45px;font-size:6.7px;color:#666;">T</div>
<div class="t" style="left:788.38px;top:136.45px;font-size:6.7px;color:#666;">F</div>
<div class="t" style="left:807.62px;top:136.45px;font-size:6.7px;color:#666;">S</div>
<div class="t" style="left:827.05px;top:136.45px;font-size:6.7px;color:#666;">S</div>
<div class="t" style="left:845.93px;top:136.45px;font-size:6.7px;color:#666;">M</div>
<div class="t" style="left:866.10px;top:136.45px;font-size:6.7px;color:#666;">T</div>
<div class="t" style="left:884.42px;top:136.45px;font-size:6.7px;color:#666;">W</div>
<div class="t" style="left:904.95px;top:136.45px;font-size:6.7px;color:#666;">T</div>
<div class="t" style="left:924.38px;top:136.45px;font-size:6.7px;color:#666;">F</div>
<div class="t" style="left:943.62px;top:136.45px;font-size:6.7px;color:#666;">S</div>
<div class="t" style="left:963.05px;top:136.45px;font-size:6.7px;color:#666;">S</div>
<div class="t" style="left:981.93px;top:136.45px;font-size:6.7px;color:#666;">M</div>
<div class="t" style="left:1002.10px;top:136.45px;font-size:6.7px;color:#666;">T</div>
<div class="t" style="left:1020.42px;top:136.45px;font-size:6.7px;color:#666;">W</div>
<div style="position:absolute;left:565.8px;top:156px;width:472.2px;height:2px;background:#1e88e5"></div>
<svg style="position:absolute;left:573px;top:146.5px;" width="7.5" height="8.5" viewBox="0 0 7.5 8.5"><rect x="0.55" y="1.1" width="6.3" height="7" rx="1.2" fill="none" stroke="#666" stroke-width="1"/><rect x="2" y="0.3" width="3.4" height="1.6" rx="0.4" fill="#333"/><path d="M2 4.3 H5.4 M2 6 H5.4" stroke="#333" stroke-width="0.9"/></svg>
<div class="t" style="left:582.70px;top:147.51px;font-size:8px;color:#1f1f1f;font-weight:bold;transform:scaleX(0.9891);z-index:3;">Test Project 1 • James M.</div>
<svg style="position:absolute;left:567.0px;top:178.8px;" width="177.75714285714287" height="66.95" viewBox="0 0 177.75714285714287 66.95"><path d="M0.75 0 V65.7 H176.15714285714287 V0" fill="none" stroke="#62acf2" stroke-width="1.2" stroke-dasharray="1.6 1.6"/></svg>
<svg style="position:absolute;left:567.0px;top:168.8px;" width="175.75714285714287" height="13.2" viewBox="0 0 175.75714285714287 13.2"><defs><pattern id="h" width="2.5" height="2.5" patternUnits="userSpaceOnUse" patternTransform="rotate(45)"><rect width="2.5" height="2.5" fill="#eef6fe"/><rect width="1" height="2.5" fill="#b9dcfb"/></pattern></defs><path d="M0.6 2 Q0.6 0.6 2 0.6 H173.75714285714287 Q175.15714285714287 0.6 175.15714285714287 2 V13 L171.95714285714286 10.2 H3.8 L0.6 13 Z" fill="url(#h)" stroke="#4aa3f0" stroke-width="1.1"/></svg>
<svg style="position:absolute;left:726.3571428571429px;top:168.20000000000002px;" width="12" height="12" viewBox="0 0 12 12"><path d="M6 0.9 L11.1 6 L6 11.1 L0.9 6 Z" fill="#90c8f7" stroke="#4aa3f0" stroke-width="1.4" stroke-linejoin="round"/></svg>
<div style="position:absolute;left:567.0px;top:190.65px;width:38.85714285714289px;height:10.2px;background:#90c8f7;border:1px solid #4aa3f0;border-radius:2px;box-sizing:border-box"></div>
<div style="position:absolute;left:605.8571428571429px;top:212.0px;width:38.857142857142776px;height:10.2px;background:#90c8f7;border:1px solid #4aa3f0;border-radius:2px;box-sizing:border-box"></div>
<div style="position:absolute;left:644.7142857142857px;top:233.35000000000002px;width:77.71428571428578px;height:10.2px;background:#90c8f7;border:1px solid #4aa3f0;border-radius:2px;box-sizing:border-box"></div>
<svg style="position:absolute;left:722.4285714285714px;top:264.20000000000005px;" width="138.89999999999986" height="45.60000000000001" viewBox="0 0 138.89999999999986 45.60000000000001"><path d="M0.75 0 V44.35000000000001 H137.29999999999987 V0" fill="none" stroke="#62acf2" stroke-width="1.2" stroke-dasharray="1.6 1.6"/></svg>
<svg style="position:absolute;left:722.4285714285714px;top:254.20000000000002px;" width="136.89999999999986" height="13.2" viewBox="0 0 136.89999999999986 13.2"><defs><pattern id="h" width="2.5" height="2.5" patternUnits="userSpaceOnUse" patternTransform="rotate(45)"><rect width="2.5" height="2.5" fill="#eef6fe"/><rect width="1" height="2.5" fill="#b9dcfb"/></pattern></defs><path d="M0.6 2 Q0.6 0.6 2 0.6 H134.89999999999986 Q136.29999999999987 0.6 136.29999999999987 2 V13 L133.09999999999985 10.2 H3.8 L0.6 13 Z" fill="url(#h)" stroke="#4aa3f0" stroke-width="1.1"/></svg>
<svg style="position:absolute;left:842.9285714285713px;top:253.60000000000002px;" width="12" height="12" viewBox="0 0 12 12"><path d="M6 0.9 L11.1 6 L6 11.1 L0.9 6 Z" fill="#90c8f7" stroke="#4aa3f0" stroke-width="1.4" stroke-linejoin="round"/></svg>
<div style="position:absolute;left:722.4285714285714px;top:276.05px;width:58.28571428571422px;height:10.2px;background:#90c8f7;border:1px solid #4aa3f0;border-radius:2px;box-sizing:border-box"></div>
<div style="position:absolute;left:780.7142857142857px;top:297.40000000000003px;width:19.428571428571445px;height:10.2px;background:#90c8f7;border:1px solid #4aa3f0;border-radius:2px;box-sizing:border-box"></div>
<svg style="position:absolute;left:839.0px;top:328.25px;" width="80.61428571428564" height="45.600000000000065" viewBox="0 0 80.61428571428564 45.600000000000065"><path d="M0.75 0 V44.350000000000065 H79.01428571428565 V0" fill="none" stroke="#62acf2" stroke-width="1.2" stroke-dasharray="1.6 1.6"/></svg>
<svg style="position:absolute;left:839.0px;top:318.25px;" width="78.61428571428564" height="13.2" viewBox="0 0 78.61428571428564 13.2"><defs><pattern id="h" width="2.5" height="2.5" patternUnits="userSpaceOnUse" patternTransform="rotate(45)"><rect width="2.5" height="2.5" fill="#eef6fe"/><rect width="1" height="2.5" fill="#b9dcfb"/></pattern></defs><path d="M0.6 2 Q0.6 0.6 2 0.6 H76.61428571428564 Q78.01428571428565 0.6 78.01428571428565 2 V13 L74.81428571428565 10.2 H3.8 L0.6 13 Z" fill="url(#h)" stroke="#4aa3f0" stroke-width="1.1"/></svg>
<svg style="position:absolute;left:901.2142857142857px;top:317.65px;" width="12" height="12" viewBox="0 0 12 12"><path d="M6 0.9 L11.1 6 L6 11.1 L0.9 6 Z" fill="#90c8f7" stroke="#4aa3f0" stroke-width="1.4" stroke-linejoin="round"/></svg>
<div style="position:absolute;left:839.0px;top:340.1px;width:38.85714285714289px;height:10.2px;background:#90c8f7;border:1px solid #4aa3f0;border-radius:2px;box-sizing:border-box"></div>
<div style="position:absolute;left:877.8571428571429px;top:361.45000000000005px;width:19.42857142857133px;height:10.2px;background:#90c8f7;border:1px solid #4aa3f0;border-radius:2px;box-sizing:border-box"></div>
<svg style="position:absolute;left:920.0142857142856px;top:381.3px;" width="13" height="13" viewBox="0 0 13 13"><path d="M6.5 1.1 L11.9 6.5 L6.5 11.9 L1.1 6.5 Z" fill="#90c8f7" stroke="#4aa3f0" stroke-width="1.4" stroke-linejoin="round"/></svg>
<div style="position:absolute;left:605.8571428571429px;top:195px;width:4.3px;height:1px;background:#8a8a8a"></div>
<div class="t" style="left:610.16px;top:192.57px;font-size:8.2px;color:#5a5a5a;transform:scaleX(0.9836);z-index:2;">Review existing Tech.Wondo content • jim@jim.com</div>
<svg style="position:absolute;left:607.5px;top:201px;" width="6" height="11.0" viewBox="0 0 6 11.0"><path d="M3 0 V9.0" stroke="#5c5c5c" stroke-width="1"/><path d="M0.9 6.8 L3 11.0 L5.1 6.8 Z" fill="#5c5c5c"/></svg>
<div style="position:absolute;left:644.7142857142857px;top:217px;width:4.3px;height:1px;background:#8a8a8a"></div>
<div class="t" style="left:649.01px;top:213.92px;font-size:8.2px;color:#5a5a5a;z-index:2;">Create recommendations for content improvements • jim@jim.com</div>
<svg style="position:absolute;left:646.5px;top:222px;" width="6" height="11.350000000000023" viewBox="0 0 6 11.350000000000023"><path d="M3 0 V9.350000000000023" stroke="#5c5c5c" stroke-width="1"/><path d="M0.9 7.150000000000023 L3 11.350000000000023 L5.1 7.150000000000023 Z" fill="#5c5c5c"/></svg>
<div style="position:absolute;left:722.4285714285714px;top:238px;width:4.3px;height:1px;background:#8a8a8a"></div>
<div class="t" style="left:726.73px;top:235.27px;font-size:8.2px;color:#5a5a5a;transform:scaleX(1.0067);z-index:2;">Design methodology • jim@jim.com</div>
<svg style="position:absolute;left:724.5px;top:244px;" width="6" height="32.05000000000001" viewBox="0 0 6 32.05000000000001"><path d="M3 0 V30.05000000000001" stroke="#5c5c5c" stroke-width="1"/><path d="M0.9 27.850000000000012 L3 32.05000000000001 L5.1 27.850000000000012 Z" fill="#5c5c5c"/></svg>
<div style="position:absolute;left:780.7142857142857px;top:281px;width:4.3px;height:1px;background:#8a8a8a"></div>
<div class="t" style="left:785.01px;top:277.97px;font-size:8.2px;color:#5a5a5a;transform:scaleX(1.0060);z-index:2;">Obtain information • frank@frank.com</div>
<svg style="position:absolute;left:782.5px;top:286px;" width="6" height="11.400000000000034" viewBox="0 0 6 11.400000000000034"><path d="M3 0 V9.400000000000034" stroke="#5c5c5c" stroke-width="1"/><path d="M0.9 7.200000000000034 L3 11.400000000000034 L5.1 7.200000000000034 Z" fill="#5c5c5c"/></svg>
<div style="position:absolute;left:800.1428571428571px;top:302px;width:4.3px;height:1px;background:#8a8a8a"></div>
<div class="t" style="left:804.44px;top:299.32px;font-size:8.2px;color:#5a5a5a;transform:scaleX(0.9738);z-index:2;">create spreadsheet • frank@frank.com</div>
<svg style="position:absolute;left:840.5px;top:307px;" width="6" height="33.10000000000002" viewBox="0 0 6 33.10000000000002"><path d="M3 0 V31.100000000000023" stroke="#5c5c5c" stroke-width="1"/><path d="M0.9 28.900000000000023 L3 33.10000000000002 L5.1 28.900000000000023 Z" fill="#5c5c5c"/></svg>
<div style="position:absolute;left:877.8571428571429px;top:345px;width:4.3px;height:1px;background:#8a8a8a"></div>
<div class="t" style="left:882.16px;top:342.02px;font-size:8.2px;color:#5a5a5a;transform:scaleX(0.9958);z-index:2;">score the products • fred@fred.com</div>
<svg style="position:absolute;left:879.5px;top:350px;" width="6" height="11.450000000000045" viewBox="0 0 6 11.450000000000045"><path d="M3 0 V9.450000000000045" stroke="#5c5c5c" stroke-width="1"/><path d="M0.9 7.250000000000045 L3 11.450000000000045 L5.1 7.250000000000045 Z" fill="#5c5c5c"/></svg>
<div class="t" style="left:901.69px;top:363.37px;font-size:8.2px;color:#5a5a5a;transform:scaleX(1.0065);z-index:2;">create handover documentation • fred@fred.com</div>
<div class="t" style="left:742.46px;top:171.22px;font-size:8.2px;color:#5a5a5a;transform:scaleX(0.9687);z-index:2;">Preliminary Research • jim@jim.com</div>
<div class="t" style="left:859.23px;top:256.62px;font-size:8.2px;color:#5a5a5a;transform:scaleX(0.9921);z-index:2;">Data collection • frank@frank.com</div>
<div class="t" style="left:917.91px;top:320.67px;font-size:8.2px;color:#5a5a5a;transform:scaleX(0.9730);z-index:2;">Analysis • fred@fred.com</div>
<div class="t" style="left:936.60px;top:384.42px;font-size:8.2px;color:#5a5a5a;transform:scaleX(0.9356);z-index:2;">Final Review • James M.</div>
<svg style="position:absolute;left:892.1571428571428px;top:371.65000000000003px;" width="29.15714285714273" height="18.849999999999966" viewBox="0 0 29.15714285714273 18.849999999999966"><path d="M1 0 V13.849999999999966 Q1 15.849999999999966 3 15.849999999999966 H25.15714285714273" fill="none" stroke="#5c5c5c" stroke-width="1"/><path d="M23.55714285714273 13.849999999999966 L27.757142857142732 15.849999999999966 L23.55714285714273 17.849999999999966 Z" fill="#5c5c5c"/></svg>
<svg style="position:absolute;left:568px;top:406.7px;" width="9" height="7.5" viewBox="0 0 9 7.5"><path d="M0.5 1.1 Q0.5 0.5 1.1 0.5 H3.3 L4.3 1.5 H7.9 Q8.5 1.5 8.5 2.1 V6.4 Q8.5 7 7.9 7 H1.1 Q0.5 7 0.5 6.4 Z M0.5 2.7 H8.5" fill="none" stroke="#555" stroke-width="0.9"/></svg>
<div class="t" style="left:578.90px;top:406.81px;font-size:8px;color:#1f1f1f;font-weight:bold;transform:scaleX(0.9178);z-index:2;">Analysis</div>
<svg style="position:absolute;left:568px;top:428.09999999999997px;" width="9" height="7.5" viewBox="0 0 9 7.5"><path d="M0.5 1.1 Q0.5 0.5 1.1 0.5 H3.3 L4.3 1.5 H7.9 Q8.5 1.5 8.5 2.1 V6.4 Q8.5 7 7.9 7 H1.1 Q0.5 7 0.5 6.4 Z M0.5 2.7 H8.5" fill="none" stroke="#555" stroke-width="0.9"/></svg>
<div class="t" style="left:578.90px;top:428.21px;font-size:8px;color:#1f1f1f;font-weight:bold;transform:scaleX(0.9874);z-index:2;">Data Collection</div>
<svg style="position:absolute;left:568px;top:449.4px;" width="9" height="7.5" viewBox="0 0 9 7.5"><path d="M0.5 1.1 Q0.5 0.5 1.1 0.5 H3.3 L4.3 1.5 H7.9 Q8.5 1.5 8.5 2.1 V6.4 Q8.5 7 7.9 7 H1.1 Q0.5 7 0.5 6.4 Z M0.5 2.7 H8.5" fill="none" stroke="#555" stroke-width="0.9"/></svg>
<div class="t" style="left:578.90px;top:449.51px;font-size:8px;color:#1f1f1f;font-weight:bold;transform:scaleX(0.9614);z-index:2;">Final Review</div>
<svg style="position:absolute;left:568px;top:470.7px;" width="9" height="7.5" viewBox="0 0 9 7.5"><path d="M0.5 1.1 Q0.5 0.5 1.1 0.5 H3.3 L4.3 1.5 H7.9 Q8.5 1.5 8.5 2.1 V6.4 Q8.5 7 7.9 7 H1.1 Q0.5 7 0.5 6.4 Z M0.5 2.7 H8.5" fill="none" stroke="#555" stroke-width="0.9"/></svg>
<div class="t" style="left:578.90px;top:470.81px;font-size:8px;color:#1f1f1f;font-weight:bold;transform:scaleX(0.9679);z-index:2;">Preliminary Research</div>
<div style="position:absolute;left:586.1px;top:144px;width:1.4px;height:339.5px;background:#ec8f8f;z-index:1"></div>
<div style="position:absolute;left:941.8px;top:156px;width:47.7px;height:16.5px;background:#fff;border:1px solid #c6c6c6;border-radius:3px;box-sizing:border-box;box-shadow:0 1px 1px rgba(0,0,0,0.12);z-index:4"></div>
<div class="t" style="left:947.20px;top:160.71px;font-size:8px;color:#555;transform:scaleX(0.9625);z-index:5;">Weeks</div>
<svg style="position:absolute;left:975.8px;top:162.5px;z-index:5" width="5.5" height="4" viewBox="0 0 5.5 4"><path d="M0.6 0.7 L2.75 2.9 L4.9 0.7" fill="none" stroke="#333" stroke-width="1.1"/></svg>
<div style="position:absolute;left:992.2px;top:155px;width:16.3px;height:15.9px;background:#fff;border:1px solid #c6c6c6;border-radius:3px;box-sizing:border-box;box-shadow:0 1px 1px rgba(0,0,0,0.12);z-index:4"></div>
<div style="position:absolute;left:996px;top:162.4px;width:9.3px;height:1.7px;background:#333;z-index:5"></div>
<div style="position:absolute;left:1011.3px;top:155px;width:16.4px;height:15.9px;background:#fff;border:1px solid #c6c6c6;border-radius:3px;box-sizing:border-box;box-shadow:0 1px 1px rgba(0,0,0,0.12);z-index:4"></div>
<div style="position:absolute;left:1015px;top:162.3px;width:9px;height:1.7px;background:#333;z-index:5"></div>
<div style="position:absolute;left:1018.65px;top:158.6px;width:1.7px;height:9px;background:#333;z-index:5"></div>
<div style="position:absolute;left:1038.4px;top:122.5px;width:5.6px;height:361px;background:#f1f1f1;z-index:6"></div>
<div style="position:absolute;left:1038.7px;top:124px;width:5.3px;height:338px;background:#c6cad1;border-radius:3px 0 0 3px;z-index:6"></div>
<svg style="position:absolute;left:994px;top:486px;" width="12" height="10" viewBox="0 0 12 10"><path d="M0.5 3.5 H3.5 M2 2 V5" stroke="#fff" stroke-width="0.9"/><circle cx="6.5" cy="2.6" r="1.8" fill="none" stroke="#fff" stroke-width="0.9"/><path d="M3.3 8.5 Q3.5 5.5 6.5 5.5 Q9.5 5.5 9.7 8.5 Z" fill="none" stroke="#fff" stroke-width="0.9"/><circle cx="10" cy="4" r="1.3" fill="none" stroke="#fff" stroke-width="0.8"/></svg>
<div class="t" style="left:1008.00px;top:487.92px;font-size:8.4px;color:#f4f7f7;">Add users</div>
<div style="position:absolute;left:0px;top:499px;width:1044px;height:1px;background:#1a1a1a"></div>
<div style="position:absolute;left:33px;top:499px;width:233px;height:1px;background:#f0f0f0"></div>
<div style="position:absolute;left:367px;top:499px;width:33px;height:1px;background:#8a8282"></div>
</body></html>
